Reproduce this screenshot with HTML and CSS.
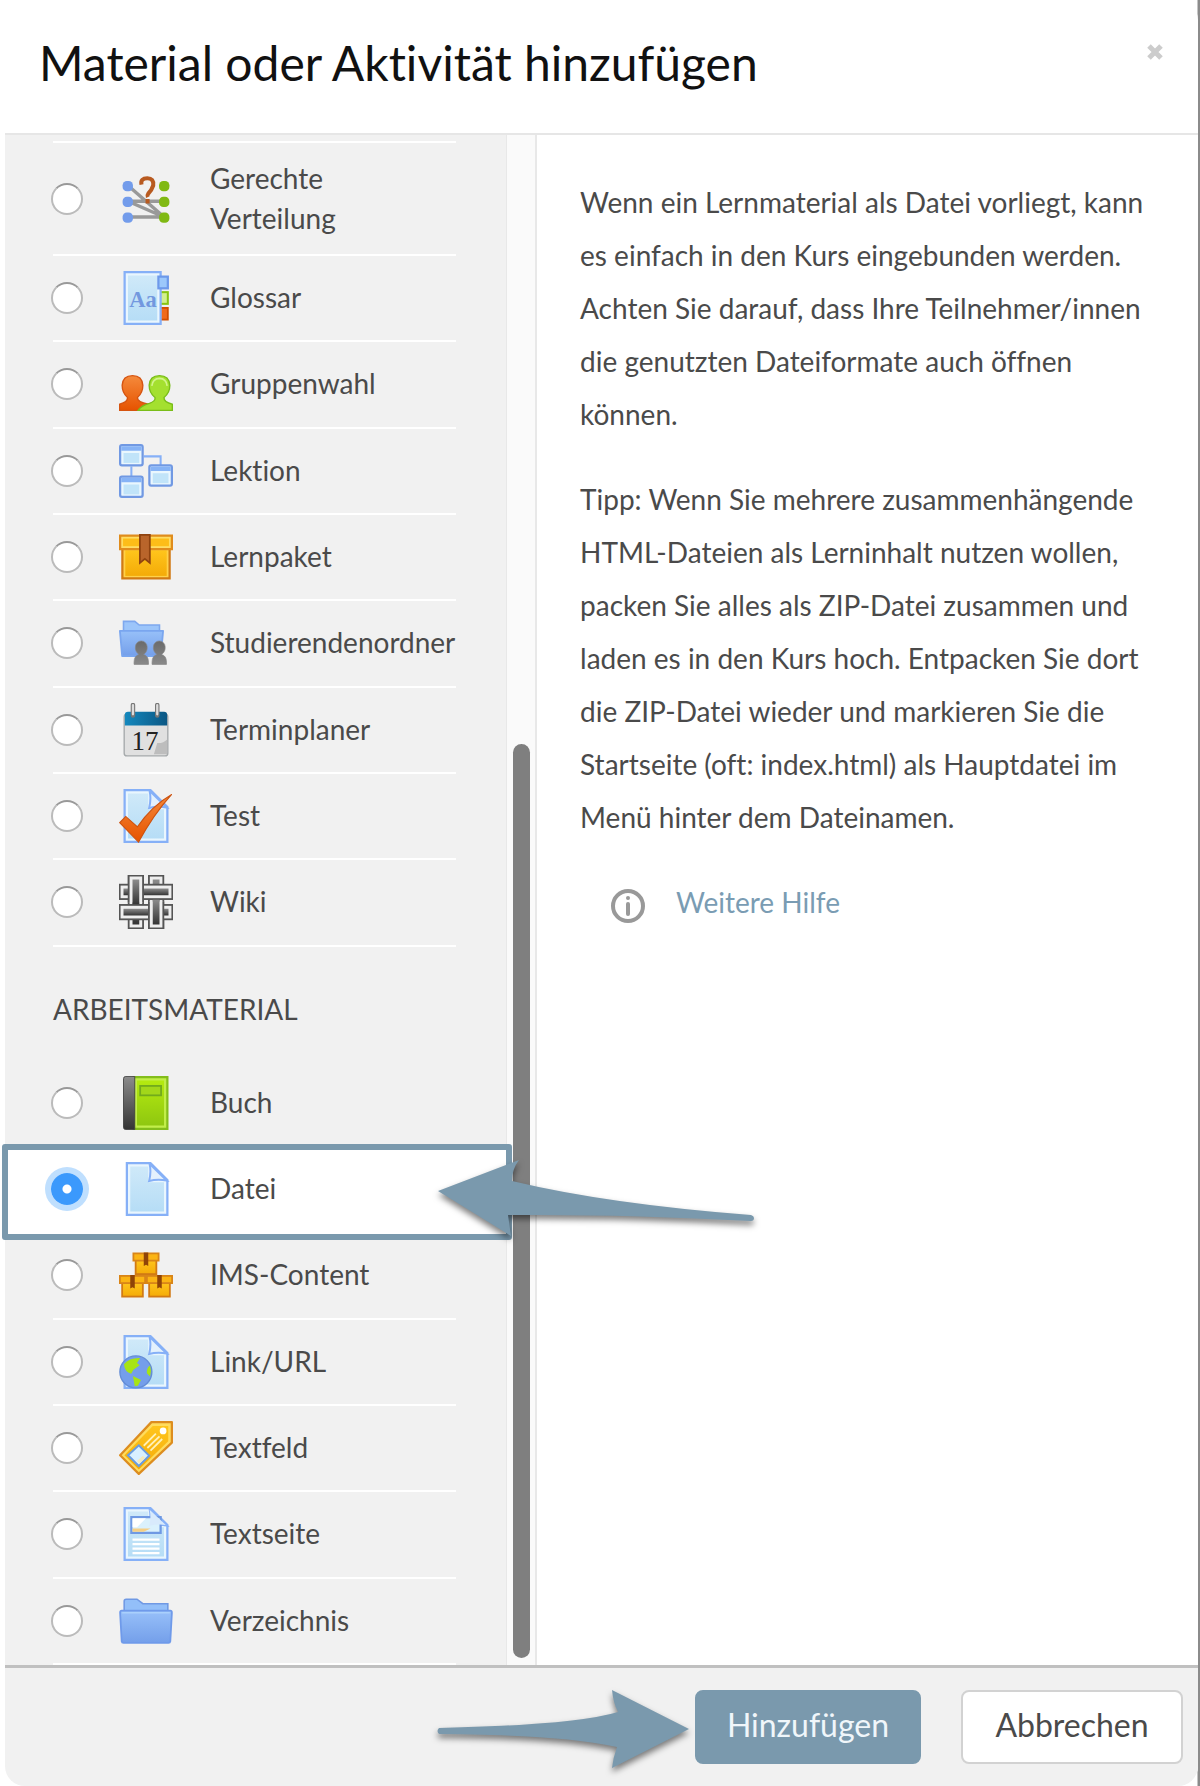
FILE: index.html
```html
<!DOCTYPE html>
<html lang="de">
<head>
<meta charset="utf-8">
<meta name="viewport" content="width=device-width, initial-scale=1">
<title>Material oder Aktivität hinzufügen</title>
<link rel="stylesheet" href="styles.css">
</head>
<body>
<svg class="defs" aria-hidden="true">
  <defs>
    <linearGradient id="sky" x1="0" y1="0" x2="0" y2="1"><stop offset="0" stop-color="#cfe9f9"/><stop offset="1" stop-color="#b6ddf6"/></linearGradient>
    <linearGradient id="blue" x1="0" y1="0" x2="0" y2="1"><stop offset="0" stop-color="#97c0f9"/><stop offset="1" stop-color="#749fea"/></linearGradient>
    <linearGradient id="amber" x1="0" y1="0" x2="0" y2="1"><stop offset="0" stop-color="#ffc51c"/><stop offset="1" stop-color="#f4ab08"/></linearGradient>
    <linearGradient id="red" x1="0" y1="0" x2="0" y2="1"><stop offset="0" stop-color="#f58a3c"/><stop offset="1" stop-color="#e65300"/></linearGradient>
    <linearGradient id="lime" x1="0" y1="0" x2="0" y2="1"><stop offset="0" stop-color="#b4ea10"/><stop offset="1" stop-color="#8fc710"/></linearGradient>
    <linearGradient id="dark" x1="0" y1="0" x2="0" y2="1"><stop offset="0" stop-color="#8c8c8c"/><stop offset="1" stop-color="#343434"/></linearGradient>
    <linearGradient id="stone" x1="0" y1="0" x2="0" y2="1"><stop offset="0" stop-color="#6a6a6a"/><stop offset="1" stop-color="#8a8a8a"/></linearGradient>
    <linearGradient id="sea" x1="0" y1="0" x2="1" y2="0"><stop offset="0" stop-color="#1488bd"/><stop offset="1" stop-color="#0b5784"/></linearGradient>
    <g id="page">
      <path d="M2.5.5H14L21.5 8V23.5H2.5Z" fill="#e9f6fe" stroke="#86b0f7"/>
      <path d="M4 2H13V9H20V22H4Z" fill="url(#sky)"/>
      <path d="M13.6.8Q14.4 4.5 13.4 8.4Q17 7.5 21.2 8.2Z" fill="#e4f1fd" stroke="#86b0f7" stroke-width=".9"/>
    </g>
    <g id="window">
      <rect x=".5" y=".5" width="10" height="9" rx=".8" fill="#eaf7fe" stroke="#7199e3"/>
      <path d="M1 1H10V3H1Z" fill="#86b3f6"/>
      <rect x="2" y="4" width="7" height="4.4" fill="#c1e4f9"/>
    </g>
    <g id="crate">
      <rect x="1.4" y="3.4" width="9.2" height="6.2" fill="url(#amber)" stroke="#d17a14" stroke-width=".8"/>
      <rect x=".4" y=".4" width="11.2" height="3.2" fill="#fbb414" stroke="#d98518" stroke-width=".8"/>
      <path d="M5 0H7V6L6 5.4L5 6Z" fill="#8f4408"/>
    </g>
    <g id="person">
      <path d="M-3.2 7.8V6.8Q-3.2 4 -1 3.4Q-2.8 2.2 -2.6 0A2.6 2.6 0 0 1 2.6 0Q2.8 2.2 1 3.4Q3.2 4 3.2 6.8V7.8Z" fill="url(#stone)" stroke="#858585" stroke-width=".3"/>
    </g>
  </defs>
</svg>

<main class="dialog" role="dialog" aria-labelledby="dialog-title">
  <header class="dialog-header">
    <h1 id="dialog-title">Material oder Aktivität hinzufügen</h1>
    <button class="close" type="button" aria-label="Schließen">
      <svg viewBox="0 0 18 18"><path d="M3 3L15 15M15 3L3 15" stroke="#ccc" stroke-width="5"/></svg>
    </button>
  </header>

  <form class="dialog-form">
    <div class="dialog-body">
      <div class="chooser">
        <label class="option option-tall">
          <input type="radio" name="module">
          <svg class="icon" viewBox="0 0 24 24">
            <path d="M4 6L20 20M4 13H20M4 13L20 20M4 20H20" stroke="#999" stroke-width="1.5" fill="none"/>
            <g fill="#739ceb"><rect x="1.6" y="4" width="4.6" height="4.6" rx="1.9"/><rect x="1.6" y="11" width="4.6" height="4.6" rx="1.9"/><rect x="1.6" y="18" width="4.6" height="4.6" rx="1.9"/></g>
            <g fill="#80b914"><rect x="17.8" y="4" width="4.6" height="4.6" rx="1.9"/><rect x="17.8" y="11" width="4.6" height="4.6" rx="1.9"/><rect x="17.8" y="18" width="4.6" height="4.6" rx="1.9"/></g>
            <path d="M10 5.6Q9.4 2.8 12.6 2.8Q15.6 2.8 15.2 6Q14.4 8.4 13 9.6Q12.4 10.4 12.8 11.2M12.7 12V14" stroke="#b85a20" stroke-width="1.8" fill="none"/>
          </svg>
          <span>Gerechte<br>Verteilung</span>
        </label>
        <label class="option">
          <input type="radio" name="module">
          <svg class="icon" viewBox="0 0 24 24">
            <rect x="17" y="16.4" width="4.7" height="5.2" fill="#f06a1c" stroke="#d24c00" stroke-width=".8"/>
            <rect x="17" y="9.4" width="4.7" height="5.2" fill="#d3ef90" stroke="#88c411" stroke-width=".9"/>
            <rect x="2.5" y=".5" width="16" height="23" fill="#e9f6fe" stroke="#86b0f7"/>
            <rect x="4" y="2" width="13" height="20" fill="url(#sky)"/>
            <rect x="17.5" y="2.5" width="4.2" height="5.2" fill="#9cc8fb" stroke="#6d99ea"/>
            <text class="icon-aa" x="4.6" y="15.8">Aa</text>
          </svg>
          <span>Glossar</span>
        </label>
        <label class="option">
          <input type="radio" name="module">
          <svg class="icon" viewBox="0 0 24 24">
            <path d="M.3 23.7V21Q4 20 3.8 18Q1.4 16 1.4 12.6Q1.7 8.3 6 8.3Q10.3 8.3 10.6 12.6Q10.6 16 8.2 18Q8 20 13 21V23.7Z" fill="url(#red)" stroke="#d65410" stroke-width=".6"/>
            <path d="M8.5 23.7Q10 21.5 13.5 20.6Q16.4 19.6 16 18Q13.4 16 13.4 12.6Q13.7 8.3 18 8.3Q22.3 8.3 22.6 12.6Q22.6 16 20 18Q19.8 20 23.7 21V23.7Z" fill="#a4e02f" stroke="#79bd19" stroke-width=".6"/>
            <path d="M14.6 12.8Q15 9.6 18 9.5Q21 9.6 21.4 12.8" stroke="#d2f48b" stroke-width=".7" fill="none"/>
          </svg>
          <span>Gruppenwahl</span>
        </label>
        <label class="option">
          <input type="radio" name="module">
          <svg class="icon" viewBox="0 0 24 24">
            <path d="M11 5.5H18.5V10M5.5 10V15" fill="none" stroke="#86b0f7" stroke-width=".9"/>
            <use href="#window"/><use href="#window" x="13" y="9"/><use href="#window" y="14"/>
          </svg>
          <span>Lektion</span>
        </label>
        <label class="option">
          <input type="radio" name="module">
          <svg class="icon" viewBox="0 0 24 24">
            <rect x="1.5" y="8" width="21" height="13.5" fill="#ffd149" stroke="#d17a14"/>
            <rect x="2.8" y="9" width="18.4" height="11.4" fill="url(#amber)"/>
            <rect x=".5" y="2.5" width="23" height="6" fill="#ffdc62" stroke="#e08c1c"/>
            <rect x="1.8" y="3.8" width="20.4" height="3.4" fill="#fdbd18"/>
            <path d="M9.3 2.2H13.7V14.6L11.5 12.8L9.3 14.6Z" fill="#b9652b" stroke="#8f4310" stroke-width=".8"/>
          </svg>
          <span>Lernpaket</span>
        </label>
        <label class="option">
          <input type="radio" name="module">
          <svg class="icon" viewBox="0 0 24 24">
            <path d="M2 8V2.4H7L9 4H18V8Z" fill="#9cc5fa" stroke="#7ea8ee" stroke-width=".7"/>
            <path d="M.4 6.6H19.6L18.6 17.8H1.4Z" fill="url(#blue)" stroke="#7aa6ef" stroke-width=".8" stroke-linejoin="round"/>
            <use href="#person" x="9.9" y="13.7"/><use href="#person" x="17.9" y="13.7"/>
          </svg>
          <span>Studierendenordner</span>
        </label>
        <label class="option">
          <input type="radio" name="module">
          <svg class="icon" viewBox="0 0 24 24">
            <rect x="2.3" y="5" width="19.4" height="18.5" rx="1.2" fill="#e0e0e0" stroke="#a5a9ab" stroke-width=".6"/>
            <path d="M2.6 10V5.2Q2.6 3.9 4 3.9H20Q21.4 3.9 21.4 5.2V10Z" fill="url(#sea)"/>
            <path d="M15.5 22.8L17 17.8Q19.6 18 21.4 16.2V22.8Z" fill="#bdbdbd"/>
            <g stroke-linecap="round"><path d="M6.2 5.6V.9M17 5.6V.9" stroke="#777" stroke-width="2"/><path d="M6.2 5V.9M17 5V.9" stroke="#ddd" stroke-width="1"/></g>
            <text class="icon-day" x="11.6" y="20.8">17</text>
          </svg>
          <span>Terminplaner</span>
        </label>
        <label class="option">
          <input type="radio" name="module">
          <svg class="icon" viewBox="0 0 24 24">
            <use href="#page"/>
            <path d="M.3 15L3 12.2L8.2 16.8Q14.5 7.5 23.4 2.4Q15.2 11.5 8.7 23.6Z" fill="url(#red)" stroke="#cd5310" stroke-width=".5"/>
          </svg>
          <span>Test</span>
        </label>
        <label class="option">
          <input type="radio" name="module">
          <svg class="icon" viewBox="0 0 24 24" stroke="#555" stroke-width=".8">
            <g fill="#eee"><rect x="4.3" y=".3" width="6.4" height="23.4"/><rect x="13.3" y=".3" width="6.4" height="23.4"/></g>
            <g fill="url(#dark)" stroke="none"><rect x="6" y="2" width="3" height="20"/><rect x="15" y="2" width="3" height="20"/></g>
            <g fill="#eee"><rect x=".3" y="4.3" width="23.4" height="6.4"/><rect x=".3" y="13.3" width="23.4" height="6.4"/></g>
            <g fill="url(#dark)" stroke="none"><rect x="2" y="6" width="20" height="3"/><rect x="2" y="15" width="20" height="3"/></g>
            <path d="M4.3 12.2V.3H10.7V12.2M13.3 11.8V23.7H19.7V11.8" fill="#eee"/>
            <g fill="url(#dark)" stroke="none"><rect x="6" y="2" width="3" height="11"/><rect x="15" y="11" width="3" height="11"/></g>
          </svg>
          <span>Wiki</span>
        </label>

        <h2>Arbeitsmaterial</h2>

        <label class="option">
          <input type="radio" name="module">
          <svg class="icon" viewBox="0 0 24 24">
            <rect x="6.5" y=".5" width="15" height="23" fill="#c2ee4a" stroke="#83bd1b"/>
            <rect x="8" y="2" width="12" height="20" fill="url(#lime)"/>
            <path d="M3 .2H7V23.8H3Q2 23.8 2 22.8V1.2Q2 .2 3 .2Z" fill="url(#dark)" stroke="#444" stroke-width=".4"/>
            <rect x="9.4" y="4.4" width="9.3" height="4.2" fill="#a2d71a" stroke="#72ab1c" stroke-width=".8"/>
          </svg>
          <span>Buch</span>
        </label>
        <label class="option option-selected">
          <input type="radio" name="module" checked>
          <svg class="icon" viewBox="0 0 24 24">
            <path d="M3.5.5H14L21.5 8V23.5H3.5Z" fill="#e9f6fe" stroke="#86b0f7"/>
            <path d="M5 2H13V9H20V22H5Z" fill="url(#sky)"/>
            <path d="M13.6.8Q14.4 4.5 13.4 8.4Q17 7.5 21.2 8.2Z" fill="#e4f1fd" stroke="#86b0f7" stroke-width=".9"/>
          </svg>
          <span>Datei</span>
          <svg class="callout-arrow" viewBox="0 0 328 96" aria-hidden="true">
            <path d="M8 36L89 5Q82 14 82 26Q178 49 321 60Q324 61 324 63Q324 66 321 66Q190 59 78 60L81 81Z" fill="#7a99ad"/>
          </svg>
        </label>
        <label class="option">
          <input type="radio" name="module">
          <svg class="icon" viewBox="0 0 24 24"><use href="#crate" x="6" y="2"/><use href="#crate" y="12"/><use href="#crate" x="12" y="12"/></svg>
          <span>IMS-Content</span>
        </label>
        <label class="option">
          <input type="radio" name="module">
          <svg class="icon" viewBox="0 0 24 24">
            <use href="#page"/>
            <circle cx="7.5" cy="16.4" r="7.1" fill="#749eea" stroke="#638cd6" stroke-width=".6"/>
            <path d="M2.2 13Q4.6 10 9.4 10.2L8 12.4L9.2 13.4L6.4 15.4L5.4 17.2Q2.6 16.6 2.2 13ZM6.2 18.2L9.8 20L8.4 22.6L7 22.8ZM13.8 13.6Q12.2 14.6 12.4 17L13.8 18.4Q14.6 16 13.8 13.6Z" fill="#a7e413"/>
          </svg>
          <span>Link/URL</span>
        </label>
        <label class="option">
          <input type="radio" name="module">
          <svg class="icon" viewBox="0 0 24 24">
            <path d="M14.4.5H23.5V9.6L8.8 23.5L.5 15.2Z" fill="#ffdc5d" stroke="#dd8d1f" stroke-linejoin="round"/>
            <path d="M15 2.2H21.9V9L8.8 21.6L2.4 15.2Z" fill="url(#amber)"/>
            <circle cx="19.6" cy="4.4" r="1.5" fill="#fff"/>
            <path d="M11 11L16.4 5.6M12.6 12L18 6.8M14 13.2L19.2 8" stroke="#fff0b8" stroke-width=".8"/>
            <path d="M4 15.2L8.8 10.8L13.4 15.4L8.8 20Z" fill="#d8efff" stroke="#6a9cdf" stroke-width=".9"/>
            <path d="M8 17.8L10.6 15.4L11.6 16.4L9 19Z" fill="#f4e9bd"/>
          </svg>
          <span>Textfeld</span>
        </label>
        <label class="option">
          <input type="radio" name="module">
          <svg class="icon" viewBox="0 0 24 24">
            <use href="#page"/>
            <rect x="5.5" y="4.5" width="13" height="7" fill="#daf1fd" stroke="#6f99e3"/>
            <path d="M6 9.6H14L11 11H6Z" fill="#f5cf86"/>
            <path d="M6 5H12L8 9H6Z" fill="#fff"/>
            <path d="M13.6 1.2Q14.4 4.5 13.4 8.4Q17 7.5 20.8 8Z" fill="#d8eafc"/>
            <path d="M6 14.5H18M6 16.5H18M6 18.5H18M6 20.5H18" stroke="#fff"/>
          </svg>
          <span>Textseite</span>
        </label>
        <label class="option">
          <input type="radio" name="module">
          <svg class="icon" viewBox="0 0 24 24">
            <path d="M2.3 8V3.2Q2.3 2.3 3.2 2.3H8L10.6 4.3H21.7V8Z" fill="#93bff9" stroke="#7099e4" stroke-width=".7"/>
            <path d="M.5 8.4Q.4 7.4 1.2 7.4H22.8Q23.6 7.4 23.5 8.4L22.8 21Q22.7 21.7 22 21.7H2Q1.3 21.7 1.2 21Z" fill="url(#blue)" stroke="#6f9aea" stroke-width=".8"/>
            <path d="M1.4 8.3H22.6" stroke="#a9d0fc" stroke-width=".7"/>
          </svg>
          <span>Verzeichnis</span>
        </label>
      </div>

      <div class="track" aria-hidden="true"><div class="thumb"></div></div>

      <section class="description">
        <p>Wenn ein Lernmaterial als Datei vorliegt, kann<br>es einfach in den Kurs eingebunden werden.<br>Achten Sie darauf, dass Ihre Teilnehmer/innen<br>die genutzten Dateiformate auch öffnen<br>können.</p>
        <p>Tipp: Wenn Sie mehrere zusammenhängende<br>HTML-Dateien als Lerninhalt nutzen wollen,<br>packen Sie alles als ZIP-Datei zusammen und<br>laden es in den Kurs hoch. Entpacken Sie dort<br>die ZIP-Datei wieder und markieren Sie die<br>Startseite (oft: index.html) als Hauptdatei im<br>Menü hinter dem Dateinamen.</p>
        <p class="help">
          <svg viewBox="0 0 36 36" aria-hidden="true"><circle cx="18" cy="18" r="15" fill="none" stroke="#999" stroke-width="4"/><path d="M18 16V26" stroke="#999" stroke-width="4" stroke-linecap="round"/><circle cx="18" cy="10" r="2" fill="#999"/></svg>
          <a href="#hilfe">Weitere Hilfe</a>
        </p>
      </section>
    </div>

    <footer class="dialog-footer">
      <svg class="footer-arrow" viewBox="0 0 260 90" aria-hidden="true">
        <path d="M4 38Q140 35 183 22Q178 12 177 0L254 39L177 78Q178 68 182 57Q130 45 4 44Q1 41 4 38Z" fill="#7a99ad"/>
      </svg>
      <button class="btn btn-primary" type="submit">Hinzufügen</button>
      <button class="btn" type="button">Abbrechen</button>
    </footer>
  </form>
</main>
</body>
</html>
```
FILE: styles.css
```css
* {
  box-sizing: border-box;
}

body {
  margin: 0;
  padding: 0 2px 0 5px;
  background: linear-gradient(to left, #8b8b8b 2px, #fff 3px);
  color: #4a4a4a;
  font-family: Lato, "Open Sans", sans-serif;
  font-size: 28px;
  font-variant-ligatures: none;
  line-height: 40px;
}

.defs {
  position: absolute;
  width: 0;
  height: 0;
}

.dialog {
  display: flex;
  flex-direction: column;
  min-height: 100vh;
  background: #fff;
  border-radius: 0 20px 20px 20px;
}

.dialog-header {
  display: flex;
  align-items: flex-start;
  justify-content: space-between;
  padding: 33px 34px 40px;
  border-bottom: 2px solid #e6e6e6;
}

h1 {
  margin: 0;
  color: #111;
  font-size: 48px;
  font-weight: 400;
  line-height: 60px;
}

.close {
  padding: 10px 0;
  border: 0;
  background: none;
}

.close svg {
  display: block;
  width: 18px;
  height: 18px;
}

.dialog-form,
.dialog-body {
  display: flex;
  flex: 1;
}

.dialog-form {
  flex-direction: column;
}

.chooser {
  display: flex;
  flex-direction: column;
  flex: 0 0 42%;
  background: #f1f1f1;
}

.chooser::before {
  content: "";
  height: 6px;
  margin: 0 50px 0 48px;
  border-bottom: 2px solid #fff;
}

.option {
  position: relative;
  display: flex;
  align-items: center;
  flex: 1 0 84px;
  margin: 0 50px 0 48px;
  border-bottom: 2px solid #fff;
  white-space: nowrap;
}

.option-tall {
  flex: 0 0 113px;
}

.option span {
  padding-bottom: 2px;
}

.option input {
  appearance: none;
  flex: none;
  width: 32px;
  height: 32px;
  margin: 0 36px 0 -2px;
  border: 2px solid #bbb;
  border-top-color: #999;
  border-radius: 50%;
  background: #fff;
}

.option input:checked {
  border: 0;
  background: radial-gradient(circle, #fff 4px, #3b99fc 5px);
  box-shadow: 0 0 0 6px #bfdffe;
}

.icon {
  flex: none;
  width: 54px;
  height: 54px;
  margin-right: 37px;
}

.icon-aa {
  fill: #7298df;
  font: bold 10px "Liberation Serif", serif;
}

.icon-day {
  fill: #222;
  font: 12px "Liberation Serif", serif;
  text-anchor: middle;
}

.option-selected {
  z-index: 1;
  margin: 0;
  padding: 0 50px 0 48px;
  border-color: transparent;
}

.option-selected::before {
  content: "";
  position: absolute;
  z-index: -1;
  inset: -3px -6px -9px -3px;
  border: 6px solid #7a99ad;
  border-radius: 3px;
  background: #fff;
}

.callout-arrow {
  position: absolute;
  top: 8px;
  left: calc(100% - 76px);
  width: 328px;
  height: 96px;
  filter: drop-shadow(0 4px 3px rgb(0 0 0 / 50%));
}

h2 {
  margin: 0 48px;
  padding: 42px 0 32px;
  font-size: 28px;
  font-weight: 400;
  line-height: 40px;
  text-transform: uppercase;
}

.track {
  display: flex;
  flex-direction: column;
  justify-content: flex-end;
  flex: 0 0 31px;
  padding: 0 5px 7px 6px;
  border: solid #e8e8e8;
  border-width: 0 2px 0 1px;
  background: #fafafa;
}

.thumb {
  height: 60%;
  border-radius: 9px;
  background: #7f7f7f;
}

.description {
  flex: 1;
  padding: 41px 40px 40px 43px;
  line-height: 53px;
}

.description p {
  margin: 0 0 32px;
  white-space: nowrap;
}

.description .help {
  display: flex;
  align-items: center;
  gap: 30px;
  padding-left: 30px;
}

.help svg {
  width: 36px;
  height: 36px;
  margin-top: 6px;
}

.help a {
  color: #7a9cb3;
  text-decoration: none;
}

.dialog-footer {
  display: flex;
  align-items: flex-start;
  justify-content: flex-end;
  padding: 22px 15px;
  border-top: 3px solid #c0c0c0;
  border-radius: 0 0 20px 20px;
  background: #f1f1f1;
}

.footer-arrow {
  width: 260px;
  height: 90px;
  margin-bottom: -16px;
  filter: drop-shadow(0 4px 3px rgb(0 0 0 / 50%));
}

.btn {
  width: 222px;
  height: 74px;
  padding: 0 0 4px;
  border: 2px solid #d2d2d2;
  border-radius: 8px;
  background: #fff;
  color: #4a4a4a;
  font: inherit;
  font-size: 32px;
}

.btn-primary {
  width: 226px;
  margin-right: 40px;
  border-color: #7a99ad;
  background: #7a99ad;
  color: #f0f6fa;
}
```
